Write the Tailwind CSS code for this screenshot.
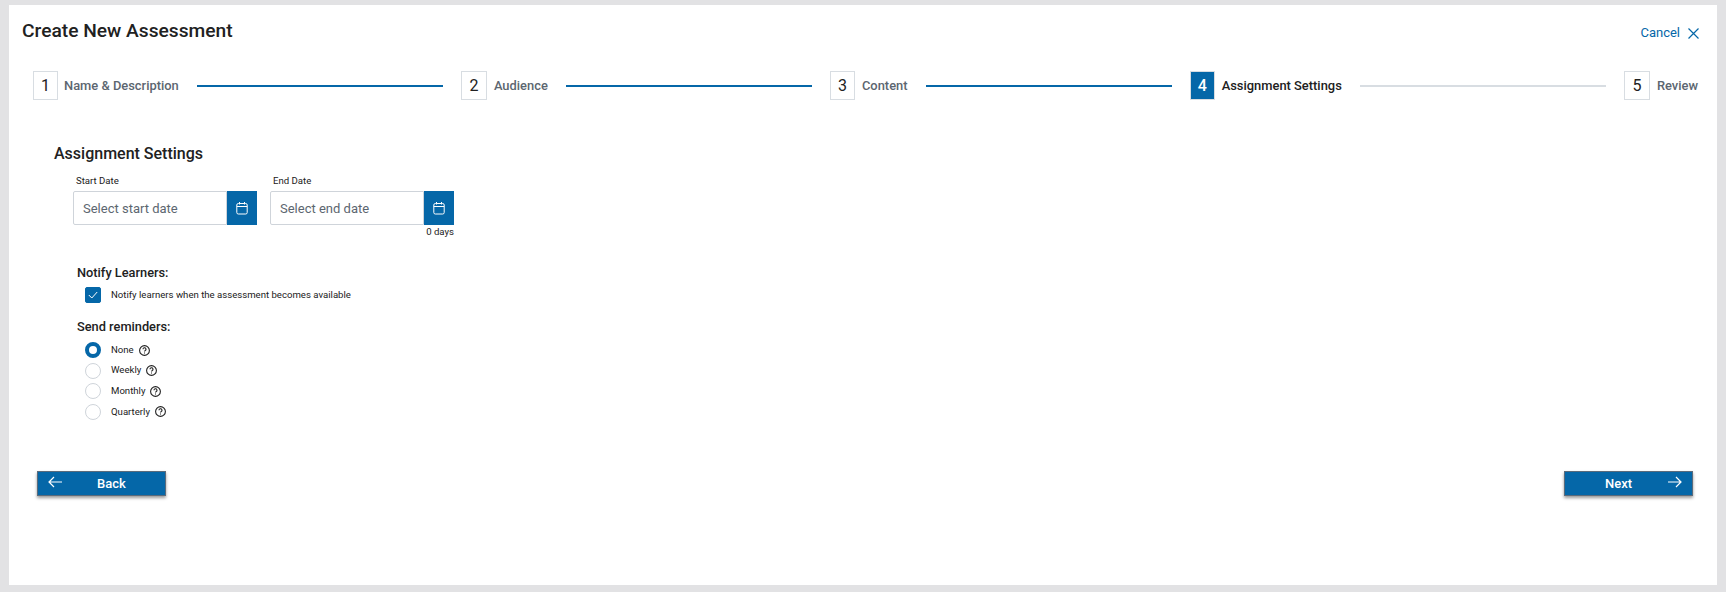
<!DOCTYPE html>
<html lang="en">
<head>
  <meta charset="UTF-8">
  <meta name="viewport" content="width=device-width, initial-scale=1.0">
  <title>Create New Assessment</title>
  <script src="https://cdn.jsdelivr.net/npm/@tailwindcss/browser@4"></script>
</head>
<body class="bg-[#e2e2e4] h-[592px] overflow-hidden font-['Roboto',sans-serif] text-[#212121]">

<div class="ml-[9px] mt-[5px] w-[1708px] h-[580px] bg-white">

  <!-- header -->
  <div class="flex justify-between pl-[13px] pr-[18px]">
    <h1 class="mt-[12px] text-[19.2px] leading-[28px] font-medium">Create New Assessment</h1>
    <a class="mt-[18px] h-[20px] flex items-center gap-[8px] text-[13px] text-[#0567a8]">
      Cancel
      <svg class="w-[11px] h-[11px]" viewBox="0 0 11 11" fill="none" stroke="#0567a8" stroke-width="1.2"><path d="M0.5 0.5l10 10M10.5 0.5l-10 10"/></svg>
    </a>
  </div>

  <!-- stepper -->
  <div class="flex items-center mt-[26px] pl-[24px] pr-[19px] h-[29px] text-[12.9px] font-medium text-[#5c6670]">
    <span class="w-[25px] h-[29px] flex items-center justify-center border border-[#d8dde2] text-[16px] font-normal text-[#212121]">1</span>
    <span class="ml-[6px]">Name &amp; Description</span>
    <span class="flex-1 h-[2px] mx-[18px] bg-[#0567a8]"></span>
    <span class="w-[26px] h-[29px] flex items-center justify-center border border-[#d8dde2] text-[16px] font-normal text-[#212121]">2</span>
    <span class="ml-[7px]">Audience</span>
    <span class="flex-1 h-[2px] mx-[18px] bg-[#0567a8]"></span>
    <span class="w-[25px] h-[29px] flex items-center justify-center border border-[#d8dde2] text-[16px] font-normal text-[#212121]">3</span>
    <span class="ml-[7px]">Content</span>
    <span class="flex-1 h-[2px] mx-[18px] bg-[#0567a8]"></span>
    <span class="w-[25px] h-[29px] flex items-center justify-center border border-[#d8dde2] bg-[#0567a8] text-[16px] text-white">4</span>
    <span class="ml-[7px] text-[#212121]">Assignment Settings</span>
    <span class="flex-1 h-[2px] mx-[18px] bg-[#d8dde2]"></span>
    <span class="w-[26px] h-[29px] flex items-center justify-center border border-[#d8dde2] text-[16px] font-normal text-[#212121]">5</span>
    <span class="ml-[7px]">Review</span>
  </div>

  <!-- settings -->
  <div class="pl-[45px] mt-[43px]">
    <h2 class="text-[16px] leading-[22px] font-medium">Assignment Settings</h2>

    <div class="flex gap-[13px] ml-[19px] mt-[9px]">
      <div class="w-[184px]">
        <label class="block ml-[3px] text-[9.6px] leading-[14px]">Start Date</label>
        <div class="flex h-[34px] mt-[3px]">
          <div class="flex-1 flex items-center pl-[9px] pt-[1px] border border-[#cfd4da] rounded-l-[2px] text-[13px] text-[#5c6670]">Select start date</div>
          <button class="w-[30px] flex items-center justify-center bg-[#0567a8]">
            <svg class="w-[12px] h-[14px]" viewBox="0 0 12 14" fill="none" stroke="white" stroke-width="1"><rect x="0.8" y="2.5" width="10.4" height="10.5" rx="1.5"/><path d="M0.8 5.5h10.4M3.5 1v2.5M8.5 1v2.5"/></svg>
          </button>
        </div>
      </div>
      <div class="w-[184px]">
        <label class="block ml-[3px] text-[9.6px] leading-[14px]">End Date</label>
        <div class="flex h-[34px] mt-[3px]">
          <div class="flex-1 flex items-center pl-[9px] pt-[1px] border border-[#cfd4da] rounded-l-[2px] text-[13px] text-[#5c6670]">Select end date</div>
          <button class="w-[30px] flex items-center justify-center bg-[#0567a8]">
            <svg class="w-[12px] h-[14px]" viewBox="0 0 12 14" fill="none" stroke="white" stroke-width="1"><rect x="0.8" y="2.5" width="10.4" height="10.5" rx="1.5"/><path d="M0.8 5.5h10.4M3.5 1v2.5M8.5 1v2.5"/></svg>
          </button>
        </div>
        <div class="mt-[1px] text-right text-[9.6px] leading-[12px]">0 days</div>
      </div>
    </div>

    <div class="ml-[23px] mt-[26px]">
      <div class="text-[12.8px] leading-[18px] font-medium">Notify Learners:</div>
      <label class="flex items-center gap-[10px] ml-[8px] mt-[5px] text-[9.6px]">
        <span class="w-[16px] h-[16px] flex items-center justify-center bg-[#0567a8] border border-[#0567a8] rounded-[2px]">
          <svg class="w-[10px] h-[8px]" viewBox="0 0 10 8" fill="none" stroke="white" stroke-width="1"><path d="M0.8 4l3 3 5.4-6"/></svg>
        </span>
        Notify learners when the assessment becomes available
      </label>

      <div class="text-[12.8px] leading-[18px] font-medium mt-[15px]">Send reminders:</div>
      <div class="ml-[8px] mt-[6px] flex flex-col gap-[4.6px] text-[9.6px]">
        <label class="flex items-center h-[16px]">
          <span class="w-[16px] h-[16px] rounded-full border-[4px] border-[#0567a8]"></span>
          <span class="ml-[10px]">None</span>
          <svg class="ml-[5px] w-[11px] h-[11px]" viewBox="0 0 11 11" fill="none" stroke="#212121" stroke-width="1.1"><circle cx="5.5" cy="5.5" r="4.9"/><path d="M4 4.3a1.5 1.5 0 1 1 2.3 1.2c-.5.3-.8.6-.8 1.1"/><path d="M5.5 7.5v1"/></svg>
        </label>
        <label class="flex items-center h-[16px]">
          <span class="w-[16px] h-[16px] rounded-full border border-[#cfd4da]"></span>
          <span class="ml-[10px]">Weekly</span>
          <svg class="ml-[5px] w-[11px] h-[11px]" viewBox="0 0 11 11" fill="none" stroke="#212121" stroke-width="1.1"><circle cx="5.5" cy="5.5" r="4.9"/><path d="M4 4.3a1.5 1.5 0 1 1 2.3 1.2c-.5.3-.8.6-.8 1.1"/><path d="M5.5 7.5v1"/></svg>
        </label>
        <label class="flex items-center h-[16px]">
          <span class="w-[16px] h-[16px] rounded-full border border-[#cfd4da]"></span>
          <span class="ml-[10px]">Monthly</span>
          <svg class="ml-[5px] w-[11px] h-[11px]" viewBox="0 0 11 11" fill="none" stroke="#212121" stroke-width="1.1"><circle cx="5.5" cy="5.5" r="4.9"/><path d="M4 4.3a1.5 1.5 0 1 1 2.3 1.2c-.5.3-.8.6-.8 1.1"/><path d="M5.5 7.5v1"/></svg>
        </label>
        <label class="flex items-center h-[16px]">
          <span class="w-[16px] h-[16px] rounded-full border border-[#cfd4da]"></span>
          <span class="ml-[10px]">Quarterly</span>
          <svg class="ml-[5px] w-[11px] h-[11px]" viewBox="0 0 11 11" fill="none" stroke="#212121" stroke-width="1.1"><circle cx="5.5" cy="5.5" r="4.9"/><path d="M4 4.3a1.5 1.5 0 1 1 2.3 1.2c-.5.3-.8.6-.8 1.1"/><path d="M5.5 7.5v1"/></svg>
        </label>
      </div>
    </div>
  </div>

  <!-- footer buttons -->
  <div class="flex justify-between mt-[51px] pl-[28px] pr-[24px]">
    <button class="relative w-[129px] h-[25px] pl-[20px] flex items-center justify-center bg-[#0567a8] border border-[#5b6b7b] shadow-[0_2px_3px_rgba(0,0,0,0.4)] text-[13px] font-medium text-white">
      <svg class="absolute left-[10px] top-[4px] w-[14px] h-[12px]" viewBox="0 0 14 12" fill="none" stroke="white" stroke-width="1.2"><path d="M14 6H1M6 1L1 6l5 5"/></svg>
      Back
    </button>
    <button class="relative w-[129px] h-[25px] pr-[20px] flex items-center justify-center bg-[#0567a8] border border-[#5b6b7b] shadow-[0_2px_3px_rgba(0,0,0,0.4)] text-[13px] font-medium text-white">
      Next
      <svg class="absolute right-[10px] top-[4px] w-[14px] h-[12px]" viewBox="0 0 14 12" fill="none" stroke="white" stroke-width="1.2"><path d="M0 6h13M8 1l5 5-5 5"/></svg>
    </button>
  </div>
</div>

</body>
</html>
